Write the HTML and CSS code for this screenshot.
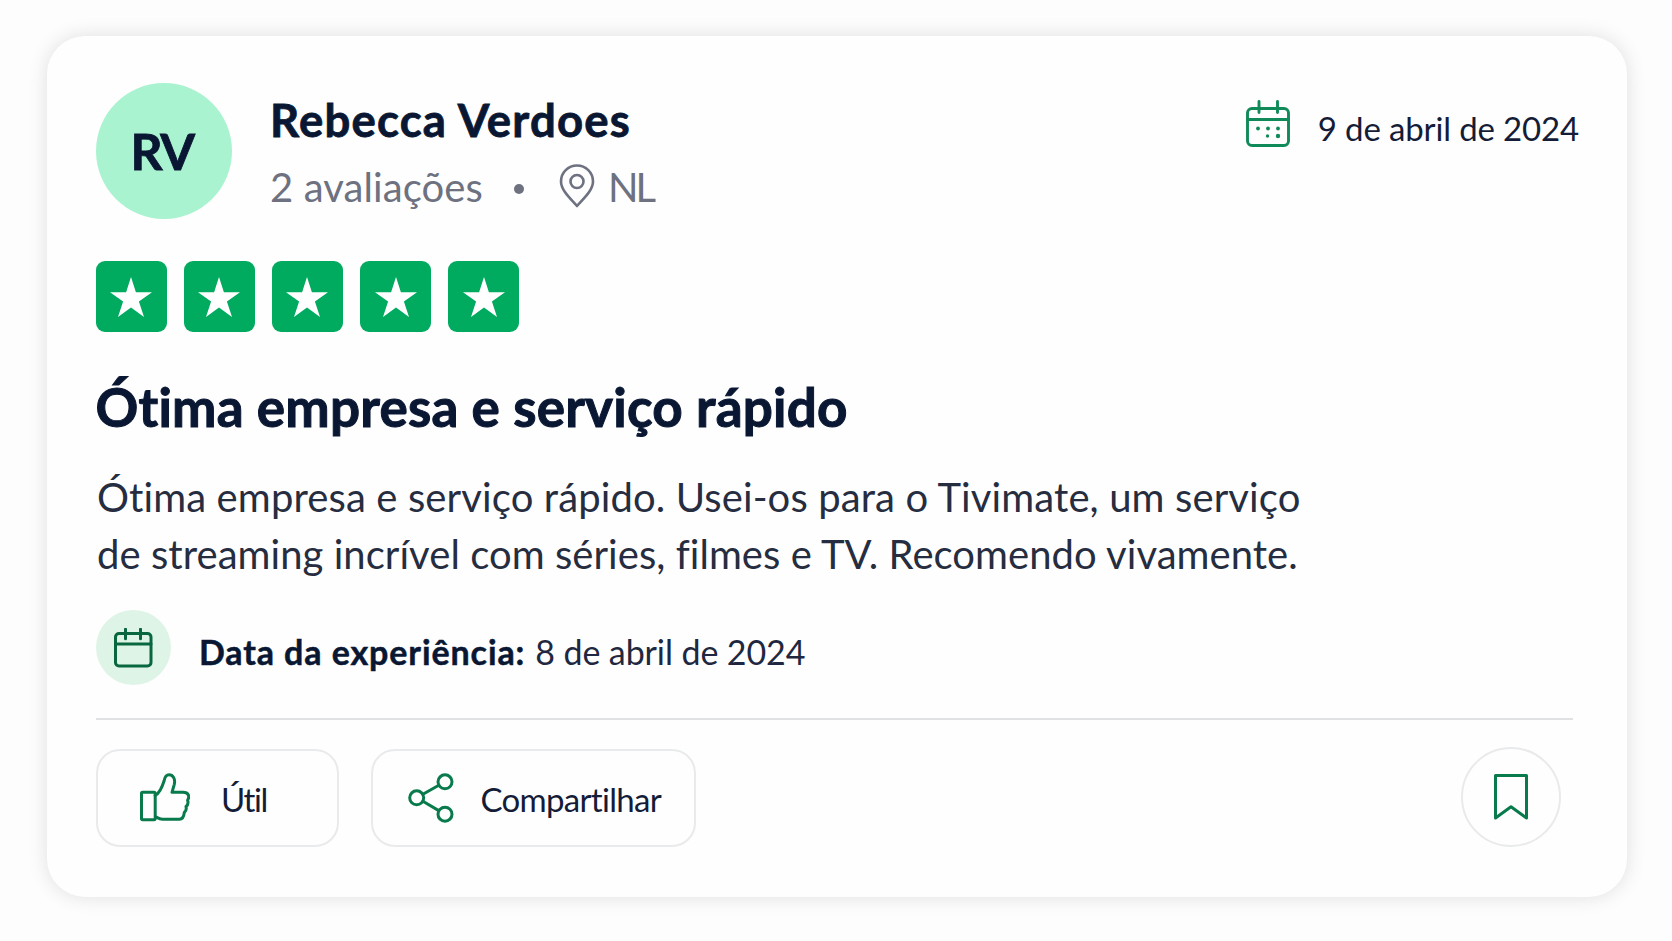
FILE: index.html
```html
<!DOCTYPE html>
<html lang="pt">
<head>
<meta charset="utf-8">
<title>Avaliação</title>
<link rel="stylesheet" href="styles.css">
</head>
<body>
<article class="card">
  <header class="head">
    <div class="avatar"><span class="initials">RV</span></div>
    <div class="person">
      <div class="name"><span>Rebecca Verdoes</span></div>
      <div class="meta">
        <span class="count">2 avaliações</span>
        <span class="dot"></span>
        <svg class="pin" width="36" height="44" viewBox="0 0 36 44"><path d="M18 42C12 35 2 26.500 2 17.500a16 16 0 0 1 32 0C34 26.500 24 35 18 42z"/><circle cx="18" cy="17.500" r="6.500"/></svg>
        <span class="country">NL</span>
      </div>
    </div>
    <div class="date">
      <svg class="cal" width="46" height="48" viewBox="0 0 46 48"><rect x="2.500" y="8.500" width="41" height="37" rx="4.500"/><path d="M2.500 19.500h41M14 1.500v11M32.500 1.500v11"/><g class="fill"><circle cx="13" cy="28.500" r="1.900"/><circle cx="23" cy="28.500" r="1.900"/><circle cx="33" cy="28.500" r="1.900"/><circle cx="22.500" cy="36" r="1.700"/><circle cx="33" cy="36" r="2.200"/></g></svg>
      <span class="date-text">9 de abril de 2024</span>
    </div>
  </header>
  <div class="stars">
    <span class="star"><svg width="42" height="40" viewBox="0 0 42 40"><path d="M21 0l4.900 15.200H42L28.900 24.500 34 40 21 30.500 8 40l5.100-15.500L0 15.200h16.100z"/></svg></span>
    <span class="star"><svg width="42" height="40" viewBox="0 0 42 40"><path d="M21 0l4.900 15.200H42L28.900 24.500 34 40 21 30.500 8 40l5.100-15.500L0 15.200h16.100z"/></svg></span>
    <span class="star"><svg width="42" height="40" viewBox="0 0 42 40"><path d="M21 0l4.900 15.200H42L28.900 24.500 34 40 21 30.500 8 40l5.100-15.500L0 15.200h16.100z"/></svg></span>
    <span class="star"><svg width="42" height="40" viewBox="0 0 42 40"><path d="M21 0l4.900 15.200H42L28.900 24.500 34 40 21 30.500 8 40l5.100-15.500L0 15.200h16.100z"/></svg></span>
    <span class="star"><svg width="42" height="40" viewBox="0 0 42 40"><path d="M21 0l4.900 15.200H42L28.900 24.500 34 40 21 30.500 8 40l5.100-15.500L0 15.200h16.100z"/></svg></span>
  </div>
  <h1 class="title"><span>Ótima empresa e serviço rápido</span></h1>
  <p class="body"><span class="l1">Ótima empresa e serviço rápido. Usei-os para o Tivimate, um serviço</span><br><span class="l2">de streaming incrível com séries, filmes e TV. Recomendo vivamente.</span></p>
  <div class="exp">
    <span class="badge"><svg width="39" height="40" viewBox="0 0 39 40"><rect x="1.500" y="5.500" width="35.500" height="32.500" rx="3.500"/><path d="M1.500 16h35.500M11.500 1.200v9.500M26.500 1.200v9.500"/></svg></span>
    <b class="exp-label">Data da experiência:</b>
    <span class="exp-date">8 de abril de 2024</span>
  </div>
  <footer class="actions">
    <button class="btn useful">
      <svg width="50" height="49" viewBox="0 0 50 49"><rect x="1.500" y="19.300" width="13.700" height="27.500" rx="1.200"/><path d="M15.200 22.500C20 20 22.500 13 24.200 7.500 25 3.500 26.500 1.800 29 1.800c4 0 6.500 4 5.300 9.500L32 19.300h11c5.500 0 7 4 4.600 8 .9 2.700.4 4.700-1.600 6.200.7 2.600.1 4.500-1.700 6-.5 4.500-1.800 6.800-4.800 6.800H22.500c-3 0-4.500-1.200-6.800-2.500"/></svg>
      <span class="util">Útil</span>
    </button>
    <button class="btn share">
      <svg width="46" height="50" viewBox="0 0 46 50"><circle cx="8.700" cy="24.800" r="7"/><circle cx="37" cy="8.800" r="7"/><circle cx="37" cy="41.200" r="7"/><path d="M14.900 21.300L30.800 12.300M14.900 28.300L30.800 37.600"/></svg>
      <span class="comp">Compartilhar</span>
    </button>
    <button class="save"><svg width="36" height="48" viewBox="0 0 36 48"><path d="M2.500 2.500h31v42.500L18 33.800 2.500 45z"/></svg></button>
  </footer>
</article>
</body>
</html>
```
FILE: styles.css
```css
* { box-sizing: border-box; }
body {
  margin: 0;
  height: 941px;
  padding: 36px 45px 0 47px;
  overflow: hidden;
  background: #fdfdfd;
  font-family: Lato, "Liberation Sans", sans-serif;
  font-variant-ligatures: none;
  color: #0a1733;
}
svg { display: block; flex: none; fill: none; stroke: #087a4b; stroke-width: 3; stroke-linecap: round; stroke-linejoin: round; }
span, b { white-space: nowrap; }
.card {
  height: 861px;
  padding: 47px 48px 0 48.500px;
  border-radius: 38px;
  background: #fefefe;
  box-shadow: 0 0 20px rgba(0, 0, 0, .12);
}
.head { display: flex; height: 136px; }
.avatar {
  display: flex; align-items: center; justify-content: center;
  width: 136px; height: 136px; border-radius: 50%;
  background: #a9f3d0;
}
.initials { margin-right: 3px; font-size: 50px; font-weight: 700; line-height: 60px; letter-spacing: -1.500px; -webkit-text-stroke: .8px; }
.person { padding: 9px 0 0 38.500px; }
.name { height: 56px; font-size: 45.500px; font-weight: 700; line-height: 56px; letter-spacing: 1.200px; -webkit-text-stroke: .8px; }
.meta { display: flex; align-items: center; height: 56px; margin-top: 11px; font-size: 40px; line-height: 56px; color: #6d7180; }
.count { letter-spacing: .1px; }
.dot { width: 10px; height: 10px; margin: 3px 0 0 31.500px; border-radius: 50%; background: #6d7180; }
.pin { margin: -3px 0 0 34.500px; stroke: #6d7180; stroke-width: 2.6; }
.country { margin-left: 13px; letter-spacing: -3px; }
.date { display: flex; height: 60px; margin-left: auto; padding-top: 17px; }
.cal { stroke: #108a58; stroke-width: 2.9; }
.fill { fill: #108a58; stroke: none; }
.date-text { margin: 6px 0 0 26.500px; font-size: 33px; line-height: 44px; letter-spacing: -.15px; color: #141c38; }
.stars { display: flex; gap: 17.200px; margin-top: 42px; }
.star { display: flex; align-items: center; justify-content: center; width: 71px; height: 71px; border-radius: 9px; background: #00ab60; }
.star svg { fill: #fff; stroke: none; }
.title { height: 64px; margin: 43px 0 0; font-size: 53px; font-weight: 700; line-height: 64px; letter-spacing: .2px; white-space: nowrap; -webkit-text-stroke: 1px; }
.body { height: 115px; margin: 30px 0 0 1.500px; font-size: 40px; line-height: 57px; color: #262d40; }
.l1 { letter-spacing: .12px; }
.l2 { letter-spacing: .05px; }
.exp { display: flex; height: 75px; margin-top: 26px; font-size: 34px; line-height: 44px; }
.badge { display: flex; align-items: center; justify-content: center; width: 75px; height: 75px; border-radius: 50%; background: #def4e7; }
.badge svg { stroke: #08673f; }
.exp-label { margin: 20px 0 0 28.500px; letter-spacing: .9px; -webkit-text-stroke: .5px; }
.exp-date { margin: 20px 0 0 10px; letter-spacing: -.1px; color: #1f2840; }
.actions { display: flex; margin-top: 33px; margin-right: 6px; padding: 29px 12px 0 0; border-top: 2px solid #e0e1e3; }
.btn, .save { font: inherit; font-variant-ligatures: none; color: #141c38; border: 2px solid #e8eaec; background: #fefefe; }
.btn { display: flex; height: 98px; border-radius: 24px; font-size: 33px; line-height: 44px; text-align: left; }
.useful { width: 243px; padding: 22px 0 0 42.500px; }
.share { width: 325px; margin-left: 32px; padding: 22px 0 0 35px; }
.util { margin: 4px 0 0 31px; letter-spacing: -1.400px; }
.comp { margin: 4px 0 0 27px; letter-spacing: -.7px; }
.save { display: flex; align-items: center; justify-content: center; width: 100px; height: 100px; margin: -2px 0 0 auto; padding: 0; border-radius: 50%; }
```
